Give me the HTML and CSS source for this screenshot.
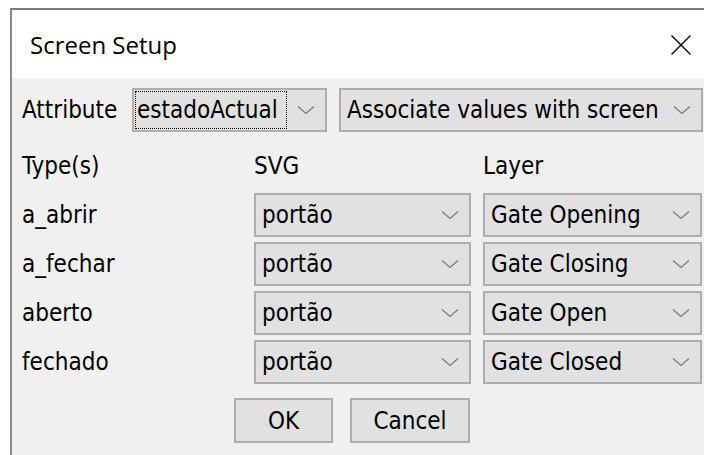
FILE: index.html
```html
<!DOCTYPE html>
<html lang="en">
<head>
<meta charset="utf-8">
<title>Screen Setup</title>
<link rel="stylesheet" href="styles.css">
</head>
<body>
<div class="window">
  <div class="titlebar">
    <span class="title">Screen Setup</span>
    <span class="close" aria-label="Close">
      <svg width="22" height="22" viewBox="0 0 22 22"><path d="M1.5 1.5 L20.5 20.5 M20.5 1.5 L1.5 20.5" stroke="#111" stroke-width="1.5" fill="none"/></svg>
    </span>
  </div>
  <div class="content">
    <div class="attr-row">
      <span class="label">Attribute</span>
      <div class="combo combo-attr">
        <span class="value focused">estadoActual</span>
        <svg class="chev" width="18" height="10" viewBox="0 0 18 10"><path d="M1 1.5 L9 8.5 L17 1.5" stroke="#7a7a7a" stroke-width="1.3" fill="none"/></svg>
      </div>
      <div class="combo combo-mode">
        <span class="value">Associate values with screen</span>
        <svg class="chev" width="18" height="10" viewBox="0 0 18 10"><path d="M1 1.5 L9 8.5 L17 1.5" stroke="#7a7a7a" stroke-width="1.3" fill="none"/></svg>
      </div>
    </div>
    <div class="grid">
      <span class="label head">Type(s)</span>
      <span class="label head">SVG</span>
      <span class="label head">Layer</span>

      <span class="label">a_abrir</span>
      <div class="combo"><span class="value">portão</span><svg class="chev" width="18" height="10" viewBox="0 0 18 10"><path d="M1 1.5 L9 8.5 L17 1.5" stroke="#7a7a7a" stroke-width="1.3" fill="none"/></svg></div>
      <div class="combo"><span class="value">Gate Opening</span><svg class="chev" width="18" height="10" viewBox="0 0 18 10"><path d="M1 1.5 L9 8.5 L17 1.5" stroke="#7a7a7a" stroke-width="1.3" fill="none"/></svg></div>

      <span class="label">a_fechar</span>
      <div class="combo"><span class="value">portão</span><svg class="chev" width="18" height="10" viewBox="0 0 18 10"><path d="M1 1.5 L9 8.5 L17 1.5" stroke="#7a7a7a" stroke-width="1.3" fill="none"/></svg></div>
      <div class="combo"><span class="value">Gate Closing</span><svg class="chev" width="18" height="10" viewBox="0 0 18 10"><path d="M1 1.5 L9 8.5 L17 1.5" stroke="#7a7a7a" stroke-width="1.3" fill="none"/></svg></div>

      <span class="label">aberto</span>
      <div class="combo"><span class="value">portão</span><svg class="chev" width="18" height="10" viewBox="0 0 18 10"><path d="M1 1.5 L9 8.5 L17 1.5" stroke="#7a7a7a" stroke-width="1.3" fill="none"/></svg></div>
      <div class="combo"><span class="value">Gate Open</span><svg class="chev" width="18" height="10" viewBox="0 0 18 10"><path d="M1 1.5 L9 8.5 L17 1.5" stroke="#7a7a7a" stroke-width="1.3" fill="none"/></svg></div>

      <span class="label">fechado</span>
      <div class="combo"><span class="value">portão</span><svg class="chev" width="18" height="10" viewBox="0 0 18 10"><path d="M1 1.5 L9 8.5 L17 1.5" stroke="#7a7a7a" stroke-width="1.3" fill="none"/></svg></div>
      <div class="combo"><span class="value">Gate Closed</span><svg class="chev" width="18" height="10" viewBox="0 0 18 10"><path d="M1 1.5 L9 8.5 L17 1.5" stroke="#7a7a7a" stroke-width="1.3" fill="none"/></svg></div>
    </div>
    <div class="buttons">
      <button class="btn btn-ok">OK</button>
      <button class="btn btn-cancel">Cancel</button>
    </div>
  </div>
</div>
</body>
</html>
```
FILE: styles.css
```css
html, body {
  margin: 0;
  padding: 0;
  background: #ffffff;
  height: 100%;
  overflow: hidden;
}

.window {
  margin: 8px 0 0 10px;
  border-top: 2px solid #7c7c7c;
  border-left: 2px solid #8a8a8a;
  height: calc(100% - 10px);
  display: flex;
  flex-direction: column;
}

.titlebar {
  height: 68px;
  background: #ffffff;
  display: flex;
  align-items: center;
  justify-content: space-between;
  padding: 0 12px 0 18px;
  flex: none;
}

.title {
  font-family: "Open Sans", "Noto Sans", sans-serif;
  font-size: 24px;
  color: #000;
}

.close {
  display: flex;
  margin-top: 1px;
}

.content {
  flex: 1;
  background: #f0f0f0;
  padding: 10px 0 0 10px;
  font-family: "DejaVu Sans Condensed", "DejaVu Sans", sans-serif;
  font-stretch: condensed;
  font-size: 24px;
  color: #000;
}

.attr-row {
  display: flex;
  align-items: center;
  height: 44px;
}

.attr-row .label {
  width: 110px;
}

.combo {
  box-sizing: border-box;
  height: 44px;
  background: #e1e1e1;
  border: 2px solid #adadad;
  display: flex;
  align-items: center;
  justify-content: space-between;
  padding: 0 10px 0 6px;
  overflow: hidden;
}

.combo-attr {
  width: 195px;
  padding-left: 1px;
}

.combo-mode {
  width: 364px;
  margin-left: 12px;
}

.value {
  white-space: nowrap;
}

.focused {
  box-sizing: border-box;
  height: 38px;
  display: flex;
  align-items: center;
  padding: 0 1px;
  border: 1px dotted #000;
  width: 152px;
  overflow: hidden;
}

.chev {
  flex: none;
}

.grid {
  margin-top: 12px;
  display: grid;
  grid-template-columns: 220px 217px 219px;
  grid-auto-rows: 44px;
  column-gap: 12px;
  row-gap: 5px;
  align-items: center;
}

.buttons {
  display: flex;
  gap: 17px;
  margin-top: 14px;
  padding-left: 212px;
}

.btn {
  box-sizing: border-box;
  height: 45px;
  background: #e1e1e1;
  border: 2px solid #adadad;
  font-family: inherit;
  font-size: inherit;
  font-stretch: inherit;
  color: #000;
  padding: 0;
}

.btn-ok {
  width: 99px;
}

.btn-cancel {
  width: 120px;
}
```
